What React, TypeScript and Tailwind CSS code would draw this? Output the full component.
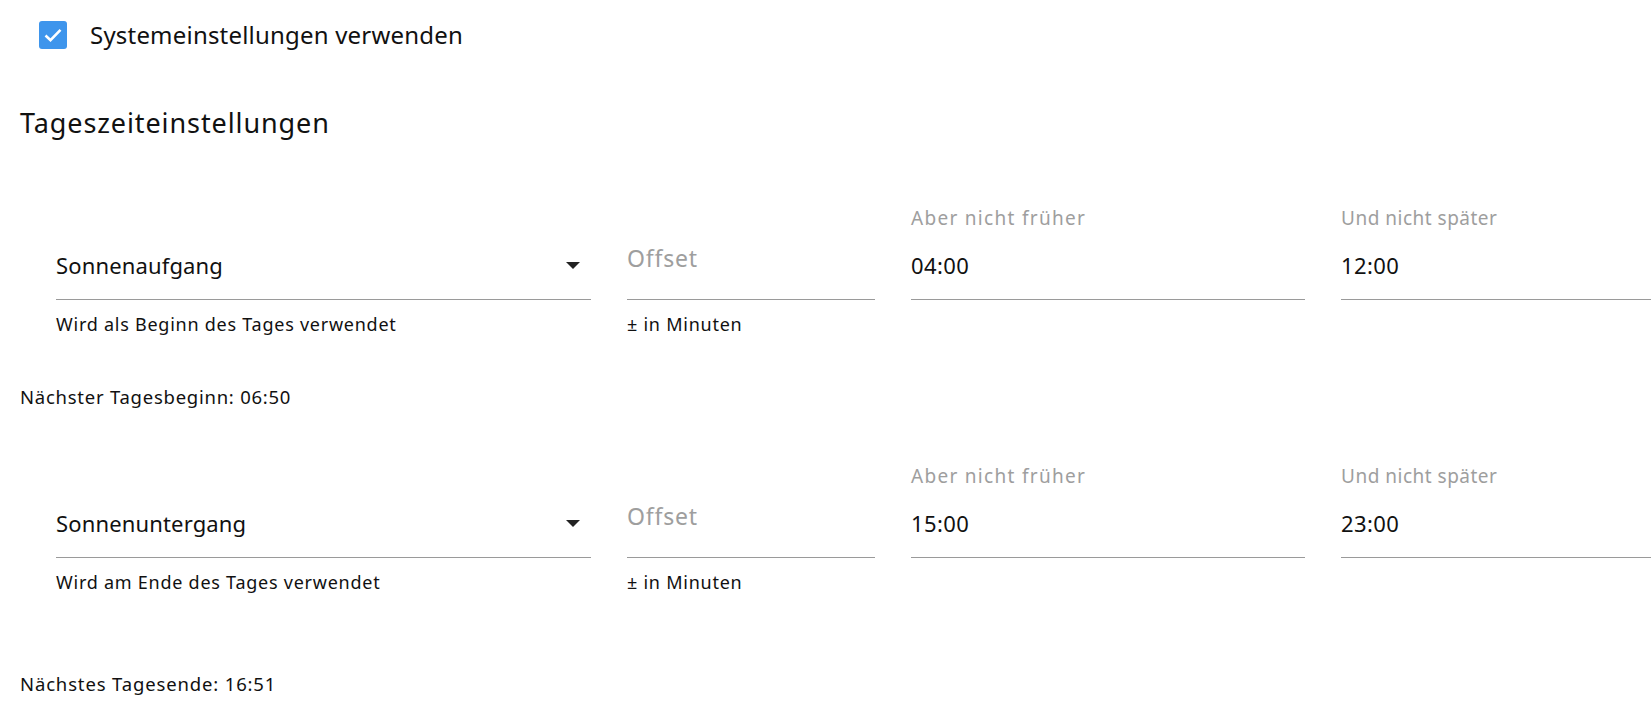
import React from "react";

const Arrow = () => (
  <svg width="14" height="8" viewBox="0 0 14 8" className="shrink-0">
    <path d="M0 0 L14 0 L7 7 Z" fill="#222" />
  </svg>
);

function SelectField({ value, helper }: { value: string; helper: string }) {
  return (
    <div className="w-[535px] shrink-0">
      <div className="h-[24px]" />
      <div className="h-[70px] border-b border-[#9a9a9a] flex items-center justify-between pr-[11px] pt-[2px]">
        <span className="text-[22px] tracking-[0.15px] text-[#111]">{value}</span>
        <Arrow />
      </div>
      <div className="h-[48px] flex items-center text-[18px] tracking-[0.75px] text-[#111]">{helper}</div>
    </div>
  );
}

function OffsetField() {
  return (
    <div className="w-[248px] shrink-0">
      <div className="h-[24px]" />
      <div className="h-[70px] border-b border-[#9a9a9a] flex items-center pb-[12px]">
        <span className="text-[23px] tracking-[0.8px] text-[#9e9e9e]">Offset</span>
      </div>
      <div className="h-[48px] flex items-center text-[18px] tracking-[0.75px] text-[#111]">± in Minuten</div>
    </div>
  );
}

function TimeField({
  label,
  value,
  w,
  track,
}: {
  label: string;
  value: string;
  w: string;
  track: string;
}) {
  return (
    <div className={w + " shrink-0"}>
      <div className={"h-[24px] flex items-center text-[19px] text-[#9e9e9e] " + track}>{label}</div>
      <div className="h-[70px] border-b border-[#9a9a9a] flex items-center pt-[2px]">
        <span className="text-[22px] tracking-[0.4px] text-[#111]">{value}</span>
      </div>
      <div className="h-[48px]" />
    </div>
  );
}

function Row({
  sel,
  helper,
  from,
  to,
}: {
  sel: string;
  helper: string;
  from: string;
  to: string;
}) {
  return (
    <div className="flex gap-[36px] pl-[56px]">
      <SelectField value={sel} helper={helper} />
      <OffsetField />
      <TimeField label="Aber nicht früher" value={from} w="w-[394px]" track="tracking-[1.3px]" />
      <TimeField label="Und nicht später" value={to} w="w-[310px]" track="tracking-[0.5px]" />
    </div>
  );
}

export default function App() {
  return (
    <div className="w-[1651px] h-[722px] overflow-hidden bg-white font-['Noto_Sans',sans-serif] text-[#111]">
      <div className="h-[70px] flex items-center pl-[39px] gap-[23px]">
        <div className="w-[28px] h-[28px] rounded-[3px] bg-[#3e95ec] flex items-center justify-center">
          <svg width="20" height="16" viewBox="0 0 20 16">
            <path d="M2.5 8.5 L7.5 13.2 L17.5 2.8" stroke="#fff" strokeWidth="2.6" fill="none" />
          </svg>
        </div>
        <span className="text-[24px] tracking-[0.2px]">Systemeinstellungen verwenden</span>
      </div>
      <div className="h-[46px] mt-[30px] flex items-center pl-[20px] text-[27px] tracking-[0.9px]">Tageszeiteinstellungen</div>
      <div className="mt-[60px]">
        <Row sel="Sonnenaufgang" helper="Wird als Beginn des Tages verwendet" from="04:00" to="12:00" />
      </div>
      <div className="mt-[37px] h-[24px] flex items-center pl-[20px] text-[18.5px] tracking-[0.75px]">Nächster Tagesbeginn: 06:50</div>
      <div className="mt-[55px]">
        <Row sel="Sonnenuntergang" helper="Wird am Ende des Tages verwendet" from="15:00" to="23:00" />
      </div>
      <div className="mt-[66px] h-[24px] flex items-center pl-[20px] text-[18.5px] tracking-[0.85px]">Nächstes Tagesende: 16:51</div>
    </div>
  );
}
